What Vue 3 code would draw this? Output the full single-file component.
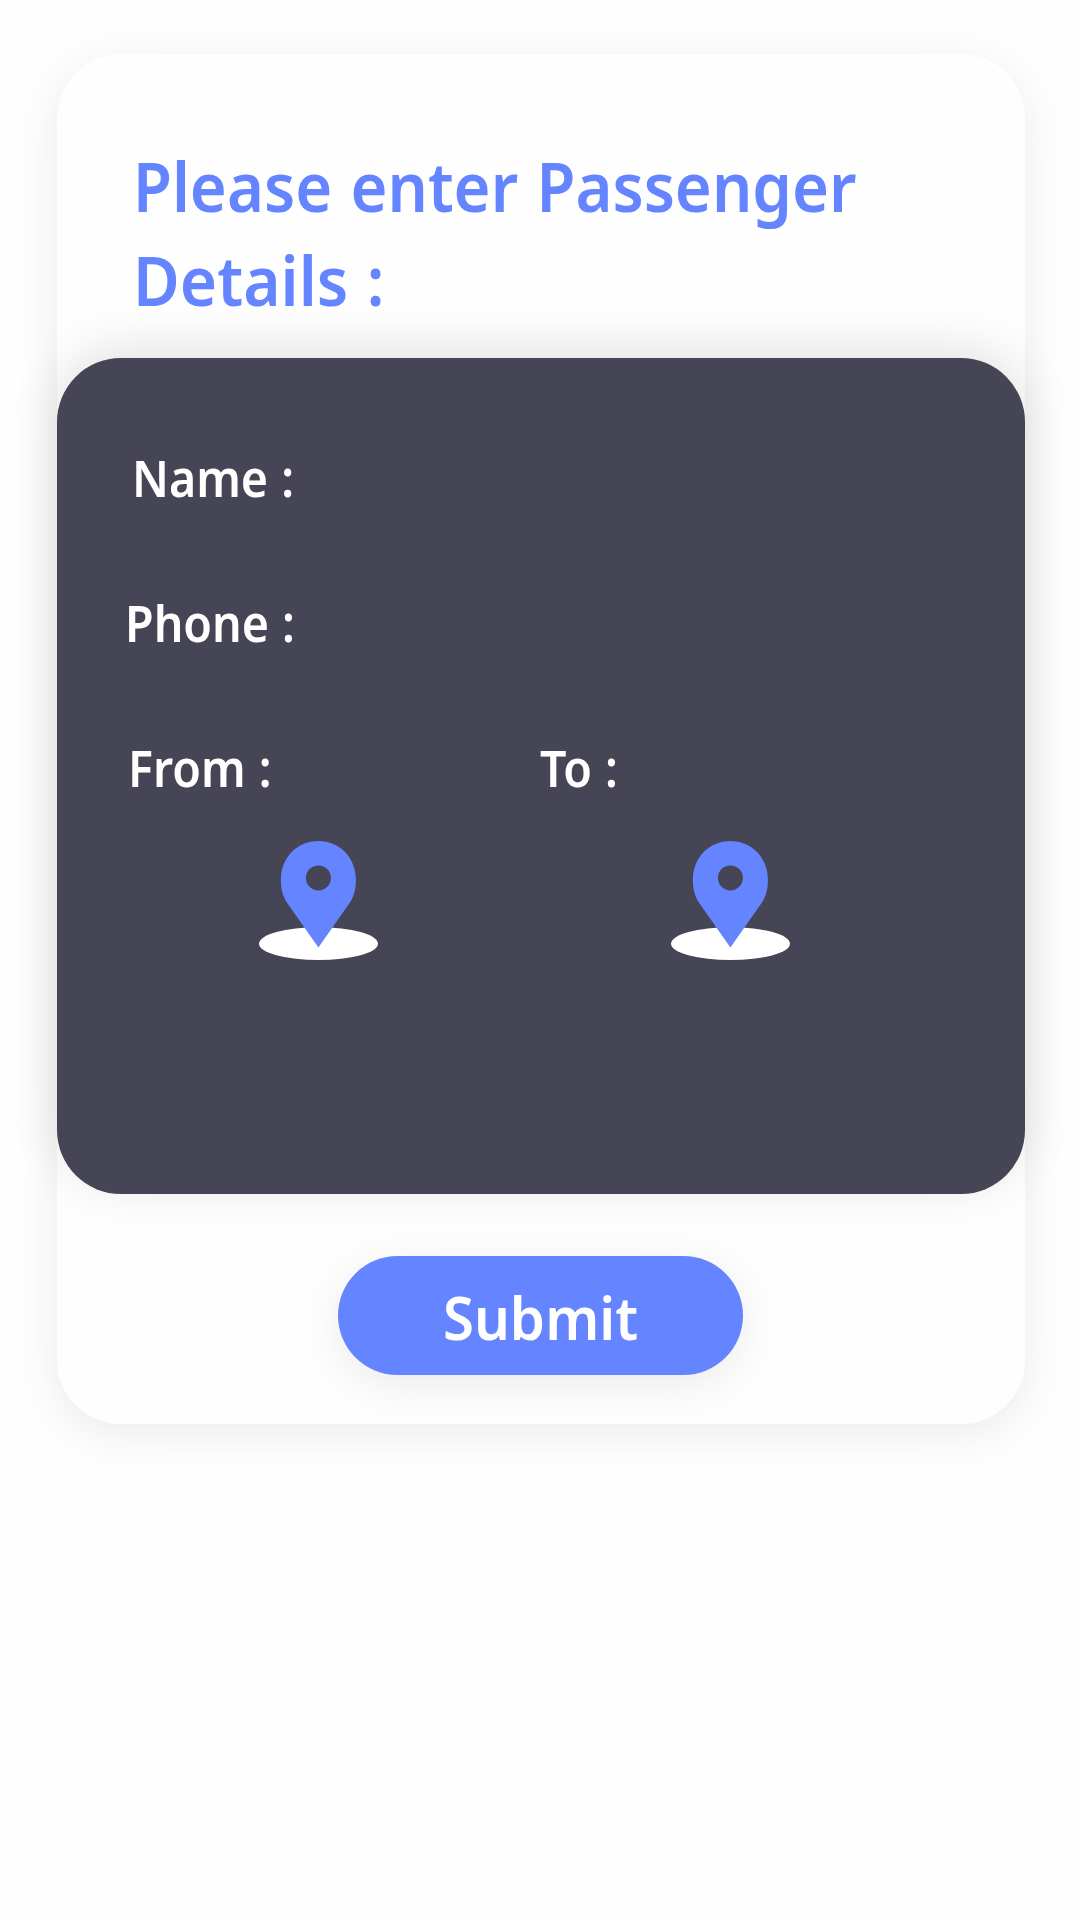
<script setup>
const places = [
  { id: 'from', label: 'From :' },
  { id: 'to', label: 'To :' },
]
</script>

<template>
  <main class="page">
    <section class="card">
      <h1 class="title"><span class="line">Please enter Passenger</span><span class="line last">Details :</span></h1>
      <div class="panel">
        <div class="row name"><span class="label">Name :</span></div>
        <div class="row phone"><span class="label">Phone :</span></div>
        <div class="places">
          <div v-for="place in places" :key="place.id" class="place" :class="place.id">
            <span class="label">{{ place.label }}</span>
            <svg class="pin" viewBox="0 0 120 120">
              <ellipse cx="59.5" cy="102.7" rx="59.5" ry="16.4" fill="#fff" />
              <path
                fill="#6584ff"
                fill-rule="evenodd"
                d="M59.4 106.6 L28.2 62 C23.6 55.4 21.9 47.5 21.9 39 C21.9 16.5 38.2 0 59.4 0 C80.6 0 96.9 16.5 96.9 39 C96.9 47.5 95.2 55.4 90.6 62 Z M59.4 24.4 a12.5 12.5 0 1 0 0 25 a12.5 12.5 0 1 0 0 -25 Z"
              />
            </svg>
          </div>
        </div>
      </div>
      <button class="submit" type="button"><span class="caption">Submit</span></button>
    </section>
  </main>
</template>

<style>
body {
  background: #fff;
}
</style>

<style scoped>
.page {
  box-sizing: border-box;
  min-height: 1920px;
  padding: 54px 55px 0 57px;
  background: #fefefe;
  font-family: "Segoe UI", "Noto Sans", sans-serif;
  font-weight: 600;
}

.card {
  box-sizing: border-box;
  display: flex;
  flex-direction: column;
  align-items: center;
  height: 1370px;
  border-radius: 64px;
  background: #fefefe;
  box-shadow: 0 10px 46px rgba(0, 0, 0, 0.08);
}

.title {
  box-sizing: border-box;
  width: 100%;
  height: 304px;
  margin: 0;
  padding: 85px 0 0 75.5px;
  color: #6584ff;
  font-size: 68.6px;
  font-weight: 600;
  line-height: 94px;
  white-space: nowrap;
}

.line {
  display: block;
  transform: scaleX(0.923);
  transform-origin: left;
  word-spacing: 2px;
}

.last {
  transform: scaleX(0.932);
}

.panel {
  box-sizing: border-box;
  width: 100%;
  height: 836px;
  padding-top: 86px;
  border-radius: 64px;
  background: #464555;
  box-shadow: 0 -10px 50px rgba(0, 0, 0, 0.11);
  color: #fff;
  font-size: 50.4px;
  line-height: 68px;
  white-space: nowrap;
}

.row {
  height: 145px;
}

.name {
  padding-left: 74.5px;
}

.phone {
  padding-left: 67.8px;
}

.label {
  display: block;
  transform: scaleX(0.924);
  transform-origin: left;
  word-spacing: 1px;
}

.places {
  display: flex;
}

.place {
  box-sizing: border-box;
  width: 412px;
}

.from {
  margin-left: 69.5px;
}

.from .label {
  margin-left: 1px;
}

.to .label {
  margin-left: 1px;
}

.pin {
  display: block;
  width: 120px;
  height: 120px;
  margin: 39px 0 0 132.5px;
}

.submit {
  width: 405px;
  height: 119px;
  margin: 62px 1px 0 0;
  padding: 4px 0 0;
  border: 0;
  border-radius: 60px;
  background: #6584ff;
  box-shadow: 0 10px 46px rgba(0, 0, 0, 0.08);
  color: #fff;
  font: inherit;
  font-size: 59px;
  line-height: 115px;
}

.caption {
  display: block;
  transform: scaleX(0.955);
}
</style>
